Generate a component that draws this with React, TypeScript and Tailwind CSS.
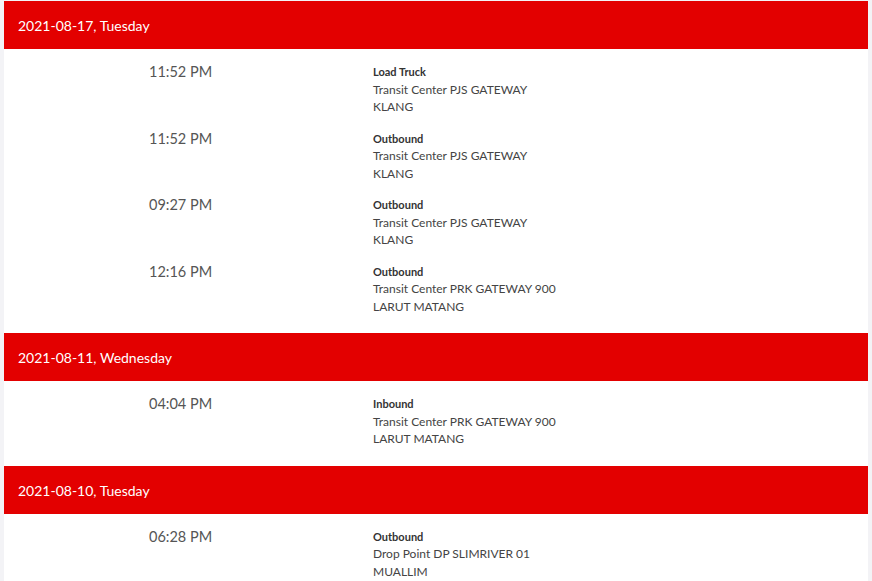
import React from "react";

type Event = { time: string; status: string; place: string; area: string };
type Day = { date: string; events: Event[] };

const days: Day[] = [
  {
    date: "2021-08-17, Tuesday",
    events: [
      { time: "11:52 PM", status: "Load Truck", place: "Transit Center PJS GATEWAY", area: "KLANG" },
      { time: "11:52 PM", status: "Outbound", place: "Transit Center PJS GATEWAY", area: "KLANG" },
      { time: "09:27 PM", status: "Outbound", place: "Transit Center PJS GATEWAY", area: "KLANG" },
      { time: "12:16 PM", status: "Outbound", place: "Transit Center PRK GATEWAY 900", area: "LARUT MATANG" },
    ],
  },
  {
    date: "2021-08-11, Wednesday",
    events: [
      { time: "04:04 PM", status: "Inbound", place: "Transit Center PRK GATEWAY 900", area: "LARUT MATANG" },
    ],
  },
  {
    date: "2021-08-10, Tuesday",
    events: [
      { time: "06:28 PM", status: "Outbound", place: "Drop Point DP SLIMRIVER 01", area: "MUALLIM" },
    ],
  },
];

const App = () => {
  return (
    <div
      className="min-h-screen bg-[#f3f3f6] pt-[1px] px-[4px]"
      style={{ fontFamily: "Lato, 'Open Sans', sans-serif" }}
    >
      <div className="bg-white">
        {days.map((day) => (
          <div key={day.date}>
            <div className="h-[48px] bg-[#e30000] flex items-center px-[14px] pt-[1px] text-white text-[14px]">
              {day.date}
            </div>
            <div className="pb-[18px]">
              {day.events.map((ev, i) => (
                <div key={i} className="flex pt-[14px]">
                  <div className="w-[369px] pl-[145px] text-[14.5px] leading-[17.5px] text-[#555]">
                    {ev.time}
                  </div>
                  <div className="text-[12px] leading-[17.5px] text-[#444]">
                    <div className="font-bold text-[11px] text-[#333]">{ev.status}</div>
                    <div>{ev.place}</div>
                    <div>{ev.area}</div>
                  </div>
                </div>
              ))}
            </div>
          </div>
        ))}
      </div>
    </div>
  );
};

export default App;
